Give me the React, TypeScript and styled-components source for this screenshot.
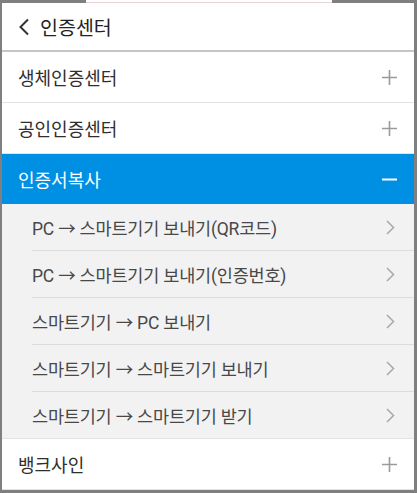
import styled, { createGlobalStyle } from 'styled-components';

const GlobalStyle = createGlobalStyle`
  html, body {
    margin: 0;
    padding: 0;
    background: #7f7f7f;
  }
  * {
    box-sizing: border-box;
  }
`;

const copyItems = [
  'PC → 스마트기기 보내기(QR코드)',
  'PC → 스마트기기 보내기(인증번호)',
  '스마트기기 → PC 보내기',
  '스마트기기 → 스마트기기 보내기',
  '스마트기기 → 스마트기기 받기',
];

const Frame = styled.div`
  width: 417px;
  height: 493px;
  padding: 0 3px 3px 2px;
  background: #7f7f7f;
  display: flex;
  flex-direction: column;
  font-family: Roboto, 'Noto Sans CJK KR', sans-serif;
  overflow: hidden;
`;

const TopStrip = styled.div`
  height: 3px;
  display: flex;
`;

const Tab = styled.div`
  margin-left: 84px;
  width: 246px;
  height: 3px;
  background: #fff;
  border-bottom: 1px solid #e8d4d4;
`;

const Screen = styled.div`
  flex: 1;
  background: #fff;
  display: flex;
  flex-direction: column;
`;

const Header = styled.header`
  height: 49px;
  display: flex;
  align-items: center;
  gap: 10px;
  padding: 0 0 0 16px;
  border-bottom: 2px solid #c6c6c6;
  color: #222;
  font-size: 19.5px;
`;

const MenuRow = styled.div<{ $active?: boolean }>`
  height: ${(p) => (p.$active ? '50px' : '51px')};
  display: flex;
  align-items: center;
  justify-content: space-between;
  padding: 0 17px 0 16px;
  font-size: 18px;
  color: ${(p) => (p.$active ? '#fff' : '#2e2e2e')};
  background: ${(p) => (p.$active ? '#0090e3' : '#fff')};
  border-bottom: ${(p) => (p.$active ? 'none' : '1px solid #e2e2e2')};
`;

const SubList = styled.div`
  background: #f2f2f2;
  border-bottom: 1px solid #e2e2e2;
`;

const SubRow = styled.div<{ $last?: boolean }>`
  height: ${(p) => (p.$last ? '46px' : '47px')};
  margin-left: 30px;
  display: flex;
  align-items: center;
  justify-content: space-between;
  padding-right: 19px;
  font-size: 17.5px;
  letter-spacing: -0.2px;
  color: #484848;
  border-bottom: ${(p) => (p.$last ? 'none' : '1px solid #dcdcdc')};
`;

const IconSvg = styled.svg`
  display: block;
  flex-shrink: 0;
`;

const BackIcon = () => (
  <IconSvg width="12" height="18" viewBox="0 0 12 18">
    <path d="M10 1.5 L2.5 9 L10 16.5" fill="none" stroke="#333" strokeWidth="2" />
  </IconSvg>
);

const PlusIcon = () => (
  <IconSvg width="15" height="15" viewBox="0 0 15 15">
    <path d="M7.5 0 V15 M0 7.5 H15" stroke="#9a9a9a" strokeWidth="1.6" />
  </IconSvg>
);

const MinusIcon = () => (
  <IconSvg width="15" height="15" viewBox="0 0 15 15">
    <path d="M0 7.5 H15" stroke="#fff" strokeWidth="2" />
  </IconSvg>
);

const ChevronIcon = () => (
  <IconSvg width="9" height="15" viewBox="0 0 9 15">
    <path d="M1 1 L7.5 7.5 L1 14" fill="none" stroke="#a8a8a8" strokeWidth="1.5" />
  </IconSvg>
);

const App = () => {
  return (
    <Frame>
      <GlobalStyle />
      <TopStrip>
        <Tab />
      </TopStrip>
      <Screen>
        <Header>
          <BackIcon />
          <span>인증센터</span>
        </Header>
        <MenuRow>
          <span>생체인증센터</span>
          <PlusIcon />
        </MenuRow>
        <MenuRow>
          <span>공인인증센터</span>
          <PlusIcon />
        </MenuRow>
        <MenuRow $active>
          <span>인증서복사</span>
          <MinusIcon />
        </MenuRow>
        <SubList>
          {copyItems.map((item, index) => (
            <SubRow key={item} $last={index === copyItems.length - 1}>
              <span>{item}</span>
              <ChevronIcon />
            </SubRow>
          ))}
        </SubList>
        <MenuRow>
          <span>뱅크사인</span>
          <PlusIcon />
        </MenuRow>
      </Screen>
    </Frame>
  );
};

export default App;
